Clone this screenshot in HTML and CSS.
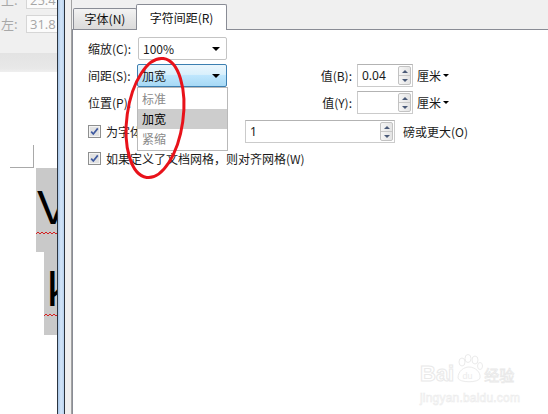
FILE: index.html
```html
<!DOCTYPE html>
<html>
<head>
<meta charset="utf-8">
<link rel="stylesheet" href="styles.css">
</head>
<body>
<div class="screen">
  <div class="doc">
    <div class="ribbon">
      <div class="rfield first"><span class="rlabel">上:</span><span class="rinput">25.4</span></div>
      <div class="rfield"><span class="rlabel">左:</span><span class="rinput">31.8</span></div>
    </div>
    <div class="band"></div>
    <div class="page">
      <div class="corner"></div>
      <div class="hl hl1">
        <span class="big">V</span>
        <svg class="squig" width="40" height="4" viewBox="0 0 40 4"><polyline points="0,3 2,1 4,3 6,1 8,3 10,1 12,3 14,1 16,3 18,1 20,3 22,1 24,3 26,1 28,3 30,1 32,3 34,1 36,3 38,1 40,3" fill="none" stroke="#d42020" stroke-width="1"/></svg>
      </div>
      <div class="hl hl2">
        <span class="big">k</span>
        <svg class="squig" width="40" height="4" viewBox="0 0 40 4"><polyline points="0,3 2,1 4,3 6,1 8,3 10,1 12,3 14,1 16,3 18,1 20,3 22,1 24,3 26,1 28,3 30,1 32,3 34,1 36,3 38,1 40,3" fill="none" stroke="#d42020" stroke-width="1"/></svg>
      </div>
    </div>
  </div>
  <div class="frame"><i class="f-dark"></i><i class="f-blue"></i><i class="f-dark"></i><i class="f-gray"></i><i class="f-line"></i></div>
  <div class="dialog">
    <div class="tabs">
      <div class="tab">字体(N)</div>
      <div class="tab active">字符间距(R)</div>
    </div>
    <div class="panel">
      <div class="row r1">
        <span class="lbl">缩放(C):</span>
        <div class="combo"><span>100%</span><i class="arrow"></i></div>
      </div>
      <div class="row r2">
        <span class="lbl">间距(S):</span>
        <div class="combo focused"><span>加宽</span><i class="arrow"></i>
          <ul class="list">
            <li>标准</li>
            <li class="sel">加宽</li>
            <li>紧缩</li>
          </ul>
        </div>
        <span class="vlbl">值(B):</span>
        <div class="spin"><span class="val">0.04</span><span class="spinbtn"><i class="up"></i><i class="dn"></i></span></div>
        <span class="unit">厘米<i class="tri"></i></span>
      </div>
      <div class="row r3">
        <span class="lbl">位置(P):</span>
        <div class="combo"><span>标准</span><i class="arrow"></i></div>
        <span class="vlbl">值(Y):</span>
        <div class="spin"><span class="val"></span><span class="spinbtn"><i class="up"></i><i class="dn"></i></span></div>
        <span class="unit">厘米<i class="tri"></i></span>
      </div>
      <div class="row r4">
        <span class="check"><svg width="13" height="13" viewBox="0 0 13 13"><rect x="0.5" y="0.5" width="12" height="12" fill="#f4f4f4" stroke="#8e8f8f"/><rect x="2" y="2" width="9" height="9" fill="#e2e2e2"/><path d="M3.2 6.6 L5.3 9 L9.8 3.4" fill="none" stroke="#3f5aa0" stroke-width="1.7"/></svg></span>
        <span class="ctext">为字体调整字间距(K):</span>
        <div class="spin wide"><span class="val">1</span><span class="spinbtn"><i class="up"></i><i class="dn"></i></span></div>
        <span class="unit2">磅或更大(O)</span>
      </div>
      <div class="row r5">
        <span class="check"><svg width="13" height="13" viewBox="0 0 13 13"><rect x="0.5" y="0.5" width="12" height="12" fill="#f4f4f4" stroke="#8e8f8f"/><rect x="2" y="2" width="9" height="9" fill="#e2e2e2"/><path d="M3.2 6.6 L5.3 9 L9.8 3.4" fill="none" stroke="#3f5aa0" stroke-width="1.7"/></svg></span>
        <span class="ctext">如果定义了文档网格，则对齐网格(W)</span>
      </div>
    </div>
  </div>

  <svg class="mark" width="548" height="414" viewBox="0 0 548 414">
    <ellipse cx="155" cy="118" rx="28" ry="60" transform="rotate(8 155 118)" fill="none" stroke="#e8121a" stroke-width="3"/>
  </svg>

  <div class="watermark">
    <div class="wm-top">
      <span class="wm-bai">Bai</span>
      <svg class="paw" width="28" height="30" viewBox="0 0 28 30">
        <ellipse cx="7" cy="8" rx="3" ry="4" fill="none" stroke="#ebebeb"/>
        <ellipse cx="13" cy="4.5" rx="3" ry="4" fill="none" stroke="#ebebeb"/>
        <ellipse cx="20" cy="6" rx="3" ry="4" fill="none" stroke="#ebebeb"/>
        <ellipse cx="25" cy="12" rx="2.5" ry="3.5" fill="none" stroke="#ebebeb"/>
        <path d="M3 24 C3 17 9 13 14 13 C20 13 26 18 25 24 C24 29 4 29 3 24 Z" fill="none" stroke="#ebebeb"/>
        <text x="7.5" y="25" font-size="9" font-family="Liberation Sans, sans-serif" fill="#ececec">du</text>
      </svg>
      <span class="wm-jy">经验</span>
    </div>
    <div class="wm-url">jingyan.baidu.com</div>
  </div>
</div>
</body>
</html>
```

FILE: styles.css
```css
* { box-sizing: border-box; margin: 0; padding: 0; }
html, body { width: 548px; height: 414px; overflow: hidden; background: #fff; }
body {
  font-family: "Noto Sans CJK SC", "Microsoft YaHei", sans-serif;
  font-size: 12px;
  color: #1a1a1a;
}
ul { list-style: none; }
i { display: block; }

.screen { display: flex; height: 414px; position: relative; }

/* left document pane */
.doc { width: 57px; flex: none; display: flex; flex-direction: column; overflow: hidden; }
.ribbon { height: 53px; flex: none; background: #f0f0f0; }
.rfield { display: flex; align-items: center; height: 18px; margin-bottom: 6px; }
.rfield.first { margin-top: -9px; }
.rlabel { width: 26px; flex: none; padding-left: 1px; color: #a8a8a8; font-size: 13px; line-height: 18px; }
.rinput {
  width: 40px; flex: none; height: 18px;
  border: 1px solid #d6d6d6; background: #fbfbfb;
  color: #a6a6a6; padding-left: 3px; font-size: 13px; line-height: 16px;
  font-family: "Open Sans", "Noto Sans", sans-serif;
}
.band { height: 19px; flex: none; background: linear-gradient(#e3e3e3, #e8e8e8 80%, #efefef); }
.page { flex: 1; background: #fff; }
.corner {
  margin: 73px 0 0 10px; width: 24px; height: 23px;
  border-right: 1px solid #a9a9a9; border-bottom: 1px solid #a9a9a9;
}
.hl { background: #c9c9c9; width: 40px; display: flex; flex-direction: column; }
.hl1 { margin-left: 36px; height: 84px; padding-top: 16px; }
.hl2 { margin-left: 44px; height: 83px; padding-top: 14px; }
.big {
  font-family: "Liberation Sans", Arial, sans-serif;
  font-size: 48px; line-height: 48px; color: #000;
  padding-left: 1px;
}
.hl2 .big { padding-left: 3px; }
.squig { display: block; margin-top: -1px; }

/* window frame */
.frame { display: flex; flex: none; height: 100%; }
.f-dark { width: 1px; background: #2b343f; }
.f-blue { width: 6px; background: linear-gradient(to right, #a6c5e8, #d4e6f9 50%, #b8d2ee); }
.f-gray { width: 6px; background: #f0f0f0; }
.f-line { width: 1px; background: #a3a3a3; }

/* dialog */
.dialog { flex: 1; display: flex; flex-direction: column; background: #f0f0f0; }
.tabs { height: 29px; flex: none; display: flex; align-items: flex-end; padding-left: 1px; }
.tab {
  height: 21px; width: 64px; text-align: center;
  border: 1px solid #898c95; border-bottom: none;
  border-radius: 2px 2px 0 0;
  background: linear-gradient(#f3f3f3, #e6e6e6 50%, #dbdbdb);
  line-height: 20px; color: #111;
}
.tab.active {
  width: 91px; height: 26px; margin-left: -1px; margin-bottom: -1px;
  background: #fff; line-height: 25px;
  position: relative; z-index: 1;
}
.panel {
  flex: 1; background: #fff;
  border-top: 1px solid #898c95; border-left: 1px solid #898c95;
  padding: 7px 0 0 15px;
}

.row { display: flex; align-items: center; height: 23px; }
.r1 { margin-bottom: 4px; }
.r2 { margin-bottom: 4px; }
.r3 { margin-bottom: 6px; }
.r5 { height: 13px; margin-top: 9px; }
.lbl { width: 50px; flex: none; }

.combo {
  width: 89px; height: 23px; flex: none; position: relative;
  display: flex; align-items: center; padding: 0 6px 0 4px;
  border: 1px solid #c4c4c4; border-radius: 2px; background: #fff;
}
.combo span { flex: 1; }
.arrow { width: 0; height: 0; border-top: 4px solid #000; border-left: 4px solid transparent; border-right: 4px solid transparent; }
.combo.focused {
  margin-left: -1px; width: 90px;
  border-color: #3c7fb1;
  background: linear-gradient(#eaf6fd, #d9f0fc 45%, #bee6fd 50%, #a7d9f5);
}
.list {
  position: absolute; left: -1px; top: 22px; width: 91px;
  background: #fff; border: 1px solid #b9b9b9;
  padding-top: 1px; padding-bottom: 1px; z-index: 3;
}
.list li { height: 20px; line-height: 20px; padding-left: 4px; color: #8a8a8a; }
.list li.sel { background: #cdcdcd; color: #000; }

.vlbl { width: 125px; flex: none; text-align: right; margin-right: 5px; }
.spin {
  width: 56px; height: 23px; flex: none;
  display: flex; align-items: center; padding-left: 4px;
  border: 1px solid #cbcbcb; border-top-color: #b3b3b3; background: #fff;
}
.spin.wide { width: 150px; }
.val { flex: 1; font-family: "Noto Sans", "Open Sans", sans-serif; font-size: 12px; }
.spinbtn {
  width: 13px; height: 19px; margin-right: 1px;
  display: flex; flex-direction: column;
  border: 1px solid #c2c2c2; border-radius: 2px;
  background: linear-gradient(to right, #f6f6f6, #e4e4e4);
}
.spinbtn .up, .spinbtn .dn { flex: 1; display: flex; align-items: center; justify-content: center; position: relative; }
.spinbtn .up { border-bottom: 1px solid #c8c8c8; }
.spinbtn .up::after { content: ""; border-bottom: 3px solid #4a5a78; border-left: 3px solid transparent; border-right: 3px solid transparent; }
.spinbtn .dn::after { content: ""; border-top: 3px solid #4a5a78; border-left: 3px solid transparent; border-right: 3px solid transparent; }

.unit { margin-left: 4px; display: flex; align-items: center; }
.tri { margin-left: 2px; width: 0; height: 0; border-top: 3px solid #000; border-left: 3px solid transparent; border-right: 3px solid transparent; }
.unit2 { margin-left: 8px; }

.check { width: 13px; height: 13px; flex: none; display: block; }
.check svg { display: block; }
.ctext { margin-left: 5px; }
.r4 .ctext { width: 139px; flex: none; }

/* overlays */
.mark { position: absolute; left: 0; top: 0; z-index: 5; pointer-events: none; }
.watermark { position: absolute; left: 420px; top: 354px; z-index: 4; }
.wm-top { display: flex; align-items: flex-end; height: 32px; }
.wm-bai {
  font-family: "Liberation Sans", sans-serif; font-weight: bold; font-size: 22px; line-height: 24px;
  color: #fff; -webkit-text-stroke: 1px #e9e9e9;
}
.paw { display: block; margin: 0 1px 2px 1px; }
.wm-jy { font-size: 15px; line-height: 22px; color: #fff; -webkit-text-stroke: 0.8px #e9e9e9; }
.wm-url {
  font-family: "Liberation Sans", sans-serif; font-size: 12px; line-height: 16px;
  color: #fff; -webkit-text-stroke: 0.6px #ebebeb; margin-top: 4px; letter-spacing: 0.2px;
}
```
